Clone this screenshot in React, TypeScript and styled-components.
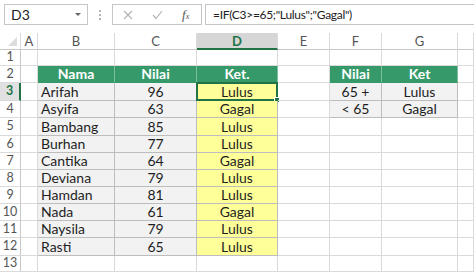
import React from "react";
import styled, { createGlobalStyle, css } from "styled-components";

const GlobalStyle = createGlobalStyle`
  html, body { margin: 0; padding: 0; background: #ffffff; }
  body { font-family: Lato, "Open Sans", "Liberation Sans", sans-serif; overflow: hidden; }
  * { box-sizing: border-box; }
`;

const GREEN = "#35996a";
const SEL = "#217346";
const GRID = "#dadada";
const LINE = "#bdbdbd";

const Page = styled.div`
  width: 474px;
  height: 272px;
  overflow: hidden;
  background: #fff;
  display: flex;
  flex-direction: column;
`;

const FormulaBar = styled.div`
  flex: none;
  display: flex;
  align-items: center;
  height: 33px;
  padding: 4px 0 8px 4px;
`;

const NameBox = styled.div`
  width: 84px;
  height: 21px;
  border: 1px solid #c6c6c6;
  display: flex;
  align-items: center;
  justify-content: space-between;
  padding: 0 6px 0 6px;
  font-size: 14px;
  color: #222;
`;

const Caret = styled.span`
  width: 0;
  height: 0;
  border-left: 3px solid transparent;
  border-right: 3px solid transparent;
  border-top: 3px solid #666;
`;

const Dots = styled.div`
  width: 24px;
  display: flex;
  flex-direction: column;
  align-items: center;
  gap: 2px;
  span {
    width: 2px;
    height: 2px;
    background: #b5b5b5;
  }
`;

const FxBox = styled.div`
  width: 90px;
  height: 21px;
  border: 1px solid #c6c6c6;
  display: flex;
  align-items: center;
  gap: 19px;
  padding-left: 10px;
`;

const Fx = styled.span`
  font-family: "Liberation Serif", serif;
  font-style: italic;
  font-size: 13px;
  color: #555;
  sub { font-size: 8px; vertical-align: baseline; }
`;

const FormulaInput = styled.div`
  flex: 1;
  height: 21px;
  margin-left: 3px;
  border: 1px solid #c6c6c6;
  border-right: none;
  display: flex;
  align-items: center;
  padding-left: 7px;
  font-size: 12px;
  letter-spacing: -0.3px;
  color: #222;
  white-space: nowrap;
`;

const Sheet = styled.div`
  flex: none;
  display: grid;
  grid-template-columns: 21px 17px 77px 82px 81px 52px 52px 76px 16px;
  grid-template-rows: 17px 16px 17px 18px 17px 18px 17px 17px 17px 17px 17px 17px 18px 16px;
`;

const ColHead = styled.div<{ $active?: boolean }>`
  display: flex;
  align-items: center;
  justify-content: center;
  font-size: 13px;
  color: #555;
  background: #fff;
  border-right: 1px solid ${GRID};
  border-bottom: 1px solid #c8c8c8;
  ${(p) =>
    p.$active &&
    css`
      background: #d6d6d6;
      color: ${SEL};
      font-weight: 700;
      border-bottom: 2px solid ${SEL};
    `}
`;

const Corner = styled.div`
  border-right: 1px solid ${GRID};
  border-bottom: 1px solid #c8c8c8;
  display: flex;
  align-items: flex-end;
  justify-content: flex-end;
  padding: 0 3px 3px 0;
`;

const CornerTri = styled.span`
  width: 0;
  height: 0;
  border-left: 9px solid transparent;
  border-bottom: 9px solid #dcdcdc;
`;

const RowHead = styled.div<{ $active?: boolean }>`
  display: flex;
  align-items: center;
  justify-content: center;
  font-size: 12.5px;
  line-height: 1;
  color: #555;
  border-right: 1px solid #c8c8c8;
  border-bottom: 1px solid ${GRID};
  ${(p) =>
    p.$active &&
    css`
      background: #e1e1e1;
      color: ${SEL};
      font-weight: 700;
      border-right: 2px solid ${SEL};
    `}
`;

type Kind = "empty" | "head" | "grey" | "yellow";

const Cell = styled.div<{ $kind: Kind; $align?: "left" | "center" }>`
  position: relative;
  display: flex;
  align-items: center;
  justify-content: ${(p) => (p.$align === "left" ? "flex-start" : "center")};
  padding-left: ${(p) => (p.$align === "left" ? "3px" : "0")};
  font-size: 14px;
  line-height: 1;
  color: #1e1e1e;
  white-space: nowrap;
  border-right: 1px solid ${GRID};
  border-bottom: 1px solid ${GRID};
  ${(p) =>
    p.$kind === "head" &&
    css`
      background: ${GREEN};
      color: #fff;
      font-weight: 700;
      border-right-color: #7cbf9c;
      border-bottom-color: ${GREEN};
    `}
  ${(p) =>
    p.$kind === "grey" &&
    css`
      background: #f2f2f2;
      border-right-color: ${LINE};
      border-bottom-color: ${LINE};
    `}
  ${(p) =>
    p.$kind === "yellow" &&
    css`
      background: #ffff99;
      border-right-color: ${LINE};
      border-bottom-color: ${LINE};
    `}
`;

const Selection = styled.div`
  position: absolute;
  left: -1px;
  top: -1px;
  right: -1px;
  bottom: -1px;
  border: 2px solid ${SEL};
  pointer-events: none;
`;

const Handle = styled.div`
  position: absolute;
  right: -4px;
  bottom: -4px;
  width: 6px;
  height: 6px;
  background: ${SEL};
  border: 1px solid #fff;
`;

const data: [string, number, string][] = [
  ["Arifah", 96, "Lulus"],
  ["Asyifa", 63, "Gagal"],
  ["Bambang", 85, "Lulus"],
  ["Burhan", 77, "Lulus"],
  ["Cantika", 64, "Gagal"],
  ["Deviana", 79, "Lulus"],
  ["Hamdan", 81, "Lulus"],
  ["Nada", 61, "Gagal"],
  ["Naysila", 79, "Lulus"],
  ["Rasti", 65, "Lulus"],
];

const side: [string, string][] = [
  ["65 +", "Lulus"],
  ["< 65", "Gagal"],
];

const cols = ["A", "B", "C", "D", "E", "F", "G", "H"];

export default function App() {
  const rows: React.ReactNode[] = [];
  for (let r = 1; r <= 13; r++) {
    const cells: React.ReactNode[] = [];
    cells.push(
      <RowHead key={`h${r}`} $active={r === 3}>
        {String(r)}
      </RowHead>
    );
    cells.push(<Cell key={`a${r}`} $kind="empty" />);
    if (r === 2) {
      cells.push(<Cell key={`b${r}`} $kind="head">Nama</Cell>);
      cells.push(<Cell key={`c${r}`} $kind="head">Nilai</Cell>);
      cells.push(<Cell key={`d${r}`} $kind="head">Ket.</Cell>);
    } else if (r >= 3 && r <= 12) {
      const [n, v, k] = data[r - 3];
      cells.push(<Cell key={`b${r}`} $kind="grey" $align="left">{n}</Cell>);
      cells.push(<Cell key={`c${r}`} $kind="grey">{v}</Cell>);
      cells.push(
        <Cell key={`d${r}`} $kind="yellow">
          {k}
          {r === 3 && (
            <Selection>
              <Handle />
            </Selection>
          )}
        </Cell>
      );
    } else {
      cells.push(<Cell key={`b${r}`} $kind="empty" />);
      cells.push(<Cell key={`c${r}`} $kind="empty" />);
      cells.push(<Cell key={`d${r}`} $kind="empty" />);
    }
    cells.push(<Cell key={`e${r}`} $kind="empty" />);
    if (r === 2) {
      cells.push(<Cell key={`f${r}`} $kind="head">Nilai</Cell>);
      cells.push(<Cell key={`g${r}`} $kind="head">Ket</Cell>);
    } else if (r === 3 || r === 4) {
      const [a, b] = side[r - 3];
      cells.push(<Cell key={`f${r}`} $kind="grey">{a}</Cell>);
      cells.push(<Cell key={`g${r}`} $kind="grey">{b}</Cell>);
    } else {
      cells.push(<Cell key={`f${r}`} $kind="empty" />);
      cells.push(<Cell key={`g${r}`} $kind="empty" />);
    }
    cells.push(<Cell key={`x${r}`} $kind="empty" />);
    rows.push(...cells);
  }

  return (
    <Page>
      <GlobalStyle />
      <FormulaBar>
        <NameBox>
          D3
          <Caret />
        </NameBox>
        <Dots>
          <span />
          <span />
          <span />
        </Dots>
        <FxBox>
          <svg width="10" height="10" viewBox="0 0 10 10">
            <path d="M1 1L9 9M9 1L1 9" stroke="#b5b5b5" strokeWidth="1.2" />
          </svg>
          <svg width="11" height="10" viewBox="0 0 11 10">
            <path d="M1 5L4 8.5L10 1" stroke="#b5b5b5" strokeWidth="1.2" fill="none" />
          </svg>
          <Fx>
            f<sub>x</sub>
          </Fx>
        </FxBox>
        <FormulaInput>=IF(C3&gt;=65;"Lulus";"Gagal")</FormulaInput>
      </FormulaBar>
      <Sheet>
        <Corner>
          <CornerTri />
        </Corner>
        {cols.map((c) => (
          <ColHead key={c} $active={c === "D"}>
            {c === "H" ? "" : c}
          </ColHead>
        ))}
        {rows}
      </Sheet>
    </Page>
  );
}
